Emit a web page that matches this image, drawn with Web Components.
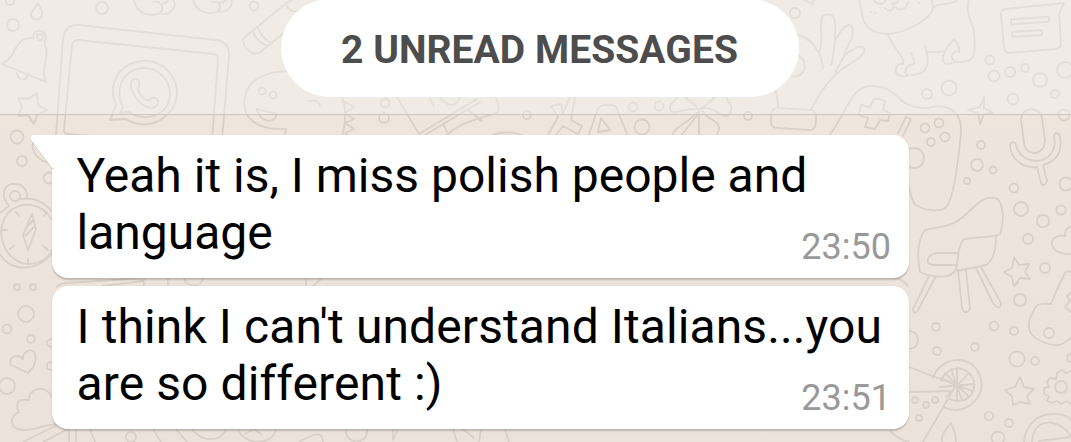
<!DOCTYPE html>
<html lang="en">
<head>
<meta charset="utf-8">
<title>Chat</title>
<style>
  body {
    margin: 0;
    height: 442px;
    overflow: hidden;
    font-family: Roboto, "Noto Sans", sans-serif;
  }
  .wide {
    letter-spacing: 0.1px;
  }
</style>
</head>
<body>
<chat-screen>
  <unread-divider>2 UNREAD MESSAGES</unread-divider>
  <chat-message time="23:50" tail>
    <text-line>Yeah it is, I miss polish people and</text-line>
    <text-line>language</text-line>
  </chat-message>
  <chat-message time="23:51">
    <text-line class="wide">I think I can't understand Italians...you</text-line>
    <text-line class="wide">are so different :)</text-line>
  </chat-message>
</chat-screen>

<script>
const define = (name, html, setup) => {
  const template = document.createElement("template");
  template.innerHTML = html;
  customElements.define(name, class extends HTMLElement {
    constructor() {
      super();
      this.attachShadow({ mode: "open" });
      this.shadowRoot.appendChild(template.content.cloneNode(true));
    }
    connectedCallback() {
      if (setup) setup(this, this.shadowRoot);
    }
  });
};

// Small rings scattered over the wallpaper: x, y, radius
const rings = [
  [10,1,4],[13,25,6],[102,8,6],[254,6,4.5],[17,137,6.5],[22,161,5],[49,178,5.5],
  [17,287,3],[33,287,3],[26,314,8],[7,329,4.5],[31,339,4],[51,343,4],[51,366,4],[7,386,8],
  [131,437,5],[385,103,4.5],[384,118,5],[527,115,4],[633,107,4.5],[659,106,4.5],
  [642,127,7.5],[748,116,4],[795,13,5],[990,60,4.5],[994,76,5.5],[1010,72,5],[1025,68,4],
  [1040,80,7],[1065,70,8],[1013,99,5.5],[1055,94,4],[1064,115,5.5],[949,88,7.5],
  [927,94,5],[925,128,4.5],[939,123,4.5],[931,142,4],[945,137,4.5],[914,158,10],
  [981,145,4],[977,165,6],[993,170,3.5],[967,181,3],[1014,188,4.5],[1021,209,7],
  [1043,221,6.2],[1061,210,4.7],[1066,184,6.5],[1028,239,5],[1045,268,5],
  [1020,300,6],[1049,333,5],[936,327,4],[994,326,4.5],[1014,331,4],[937,351,4],
  [975,347,4],[1017,359,7.7],[1035,361,4],[1071,358,4],[909,340,9],
  [915,400,3],[926,405,3],[935,400,3],[919,418,3],[989,416,4.3],[1009,423,4],[998,438,6.5]
];

define("chat-wallpaper", `
  <style>
    :host {
      display: block;
      background: linear-gradient(#eee6dd 114px, #ede4dd 200px, #ece2dc);
    }
    svg {
      display: block;
      fill: none;
      stroke: #d9d0c8;
      stroke-width: 1.8;
      stroke-linecap: round;
      stroke-linejoin: round;
    }
  </style>
  <svg width="1071" height="442" viewBox="0 0 1071 442">
    <g class="rings"></g>
    <!-- drop, bell and star -->
    <path d="M38 3C35 8 31 11 31 15C32 21 41 21 42 15C43 11 40 8 38 3Z"/>
    <path d="M2 64C14 59 15 43 24 39C29 37 32 39 34 38C31 31 42 28 45 34C48 39 43 42 45 45C51 56 39 70 46 82Z"/>
    <circle cx="40" cy="37" r="3"/>
    <path d="M17 73C18 81 25 81 28 76"/>
    <path d="M37 93L38 105L47 110L37 115L34 124L28 115L18 116L22 107L18 98L28 99Z"/>
    <!-- tablet with a handset badge -->
    <path d="M56 135L63 39Q65 24 79 25L216 40Q230 42 229 56L222 140"/>
    <path d="M68 134Q64 134 64 130L72 45Q73 40 78 40L214 54Q219 55 218 60L212 140"/>
    <path d="M68 134L92 136"/>
    <path d="M110 120L116 105C107 84 119 63 143 61C162 60 177 75 177 93C176 118 147 133 126 119Z"/>
    <path d="M120 113L123 107C114 91 122 70 142 68C158 67 170 80 170 94C169 116 145 123 129 112Z"/>
    <path d="M134 79C140 77 140 86 138 89C140 96 145 100 149 101C152 95 158 98 158 103C155 112 143 107 137 99C131 91 128 82 134 79Z"/>
    <!-- mittens -->
    <path d="M134 0C136 13 150 18 160 13C165 9 161 0 153 2M160 13C169 17 178 7 173 0M168 0C166 3 163 4 161 4"/>
    <path d="M193 0C195 9 205 16 217 12C223 8 219 0 212 2M219 12C227 13 234 5 231 0M226 0C223 3 220 3 219 3"/>
    <!-- crayon -->
    <path d="M285 4L245 37C239 42 249 56 259 53L300 20M253 31C255 39 263 44 267 46M258 28C260 35 267 41 271 43M286 4C288 11 295 13 301 10M286 3L300 -4"/>
    <!-- ghost bubble -->
    <path d="M300 73C276 68 248 76 245 97C241 117 256 131 286 129L283 142"/>
    <circle cx="262" cy="91" r="3.5"/><circle cx="273" cy="95" r="3.5"/>
    <path d="M257 109L277 114C275 124 259 123 257 109ZM309 101C315 99 319 102 320 106"/>
    <path d="M341 96C347 105 346 125 341 140M345 102L354 107L345 113L354 119L345 123L354 129L345 133L352 139"/>
    <!-- pencil case -->
    <path d="M397 97L419 134L477 99M420 138L480 102M440 142C455 124 471 121 494 114C500 112 500 108 496 98M430 99L434 106M443 124L447 132M468 110L482 121M474 114L480 121M440 97C446 106 456 109 460 97M484 140C496 131 513 130 526 137"/>
    <!-- letters -->
    <path d="M570 97L563 113L561 104L551 106L558 117L548 135M575 97L571 120L582 126L578 134L563 126L550 142M587 140L597 111Q599 105 605 105H612Q617 106 618 112L628 136M598 132L601 118L610 130Z"/>
    <!-- clover -->
    <path d="M699 109C685 107 672 117 670 109C668 103 675 104 677 97M699 109C713 103 725 123 730 113C734 106 729 104 726 97M685 97L697 107M715 97L701 109M698 112C687 124 676 125 672 136M699 113L680 137M699 111V137M702 110C709 123 726 120 716 136"/>
    <!-- glove -->
    <path d="M798 35C809 37 821 50 823 68M798 55Q807 61 804 70Q800 78 792 76M775 89Q778 100 778 107M819 52C825 42 817 19 824 15C840 11 834 31 835 41C833 51 834 58 831 65M835 41C841 30 847 22 851 26C858 35 844 48 844 57C840 62 839 67 835 72M845 55C853 49 861 44 864 48C868 54 852 63 842 69C829 79 818 96 811 110"/>
    <rect x="771" y="109" width="45" height="20" rx="6" transform="rotate(4 793 119)"/>
    <path d="M800 -2L813 4L814 -2"/>
    <!-- dog -->
    <path d="M857 -3C861 1 861 12 863 19C873 47 918 30 931 13C936 7 929 1 933 -2M874 0C876 5 884 5 886 0M892 4C898 4 899 0 897 -1M894 5C893 11 889 13 885 8M896 7C898 11 907 10 908 2M934 7C942 1 951 7 959 -1M969 -2C965 17 973 21 974 32C977 60 972 63 956 62C948 59 953 49 959 52C961 47 956 42 954 39C951 43 948 45 945 51C940 53 935 52 928 52M888 34C891 46 900 51 903 60V64C894 62 893 75 901 76C906 78 909 74 908 75C903 75 906 65 911 65L915 63L911 53M925 46C930 62 929 75 912 75M945 51C939 64 946 66 955 62"/>
    <path d="M871 12h.1M875 13h.1M919 3h.1"/>
    <!-- speech card -->
    <path d="M1064 3L1006 9Q1000 10 1001 15L1004 48Q1005 53 1009 53L1056 49Q1061 48 1061 43L1059 14Z"/>
    <rect x="1011" y="18" width="38" height="5" rx="1" transform="rotate(-4 1030 20)"/>
    <rect x="1012" y="31" width="30" height="5" rx="1" transform="rotate(-4 1027 34)"/>
    <!-- gamepad -->
    <path d="M829 136C847 111 851 89 868 86C901 84 891 108 928 108C943 103 962 108 961 132C958 164 954 197 947 206C943 213 921 211 914 203C910 195 909 188 908 180"/>
    <path d="M879 99L885 101L883 110L890 113L888 121L880 120L875 129L865 127L868 118L859 115L861 105L870 107L874 99Z"/>
    <path d="M906 117L911 119L903 136M906 117L898 133"/>
    <path d="M984 97L980 107L968 110L978 113L980 124L984 114L993 113L984 108Z"/>
    <!-- microphone -->
    <path d="M1024 142L1021 120C1021 105 1041 107 1042 118L1045 140C1045 157 1024 157 1024 142ZM1016 144Q1012 140 1010 145C1010 158 1023 169 1037 167L1041 183Q1044 188 1047 181L1043 165C1060 160 1062 149 1060 136Q1056 130 1054 136C1060 166 1020 169 1016 144Z"/>
    <!-- chair -->
    <path d="M925 230C944 225 950 228 964 216C975 207 984 193 998 199C1004 207 1004 224 1000 234C990 239 971 236 963 240C956 251 959 260 956 269C950 282 926 275 920 272C916 253 919 238 925 230ZM958 253H936C925 256 926 264 933 265H957M996 237C996 253 992 261 986 265L957 271M929 276L913 309Q914 316 918 310L936 276M958 270L962 308Q965 316 970 309L966 270M976 268L993 303Q1000 312 1001 303L981 267"/>
    <path d="M1014 257L1019 265L1029 264L1025 272L1030 279L1020 278L1014 286L1012 277L1004 272L1012 268ZM1071 226C1065 229 1065 233 1065 236C1047 233 1046 255 1071 254M1057 290L1065 273Q1067 270 1071 272"/>
    <!-- guitar -->
    <path d="M1060 282L1051 304C1036 302 1036 306 1030 318C1026 331 1032 338 1043 342C1056 347 1062 347 1071 337M1071 292L1067 296L1070 301L1065 307L1071 312M1013 282Q1013 290 1018 282"/>
    <!-- barrow -->
    <path d="M909 367L956 385L923 442M909 392L952 391M933 378C939 357 972 352 980 376C988 397 964 418 943 407M941 381C948 363 970 365 974 382C976 397 962 405 950 399M957 368V401M945 373L969 397M940 387L974 384M946 397L968 374M951 369L962 400M941 378L972 391M890 431Q899 440 909 442M951 423Q937 438 944 445M951 423Q958 438 955 445"/>
    <path d="M1020 377L1024 387L1034 389L1027 396L1030 404L1020 402L1013 405L1012 396L1005 390L1015 387ZM1071 371L1066 373L1062 370L1057 373L1056 379L1050 378L1047 382L1049 387L1044 388V394L1049 396L1047 401L1052 403L1057 401L1061 404L1067 401L1071 404"/>
    <circle cx="1061" cy="387" r="6"/>
    <path d="M1024 442C1027 405 1071 412 1071 421M1032 442C1033 414 1063 420 1071 437L1039 441"/>
    <!-- compass, hearts and cloud -->
    <path d="M9 206C-1 194 5 183 15 184C26 184 28 195 27 199M20 199C36 197 43 202 52 211M52 254C32 276 6 268 0 254M9 206L0 213M52 220C41 201 20 201 8 213C-3 227 0 247 13 258C27 270 47 262 52 250M32 214L36 229L28 250L23 235ZM23 235L32 214M25 230L33 220M26 235L34 227M16 212L19 216M47 212L44 216M3 230H7M10 249L14 246M43 246L48 250M28 259V263"/>
    <circle cx="15" cy="196" r="5"/>
    <path d="M30 120L34 123L36 119M33 142C31 151 37 162 52 163"/>
    <path d="M28 373L11 365C8 357 17 353 23 359C22 350 35 347 35 355C37 363 33 368 28 373ZM52 397C45 383 28 389 29 400C17 398 15 405 19 412C12 415 10 422 14 427C28 436 47 422 56 425M23 442L57 425M43 442L66 430M69 429V442M76 429V442M90 429L95 442M153 429L161 442M176 429L187 442M190 426C201 444 222 443 227 427M238 429C243 446 274 446 276 429M245 434L254 429L261 434M300 441L313 435Q323 432 323 442M346 429C344 445 369 446 367 429M393 429V440L398 429M453 429L457 442M463 429L474 438M481 429L479 442M505 429L509 442"/>
    <path d="M57 287Q60 283 68 283L144 278V286M103 286L143 281M168 278V286M184 278C186 288 202 288 203 278M306 278V286M313 286L322 278M908 286Q902 278 893 278"/>
  </svg>
`, (host, root) => {
  root.querySelector(".rings").innerHTML = rings
    .map(([x, y, r]) => `<circle cx="${x}" cy="${y}" r="${r}"/>`)
    .join("");
});

define("chat-screen", `
  <style>
    :host {
      display: grid;
      width: 1071px;
      height: 442px;
      overflow: hidden;
    }
    chat-wallpaper, .thread {
      grid-area: 1 / 1;
    }
    .thread {
      display: flex;
      flex-direction: column;
      align-items: flex-start;
      gap: 8px;
      z-index: 1;
    }
    ::slotted(unread-divider) {
      margin-bottom: 12px;
    }
  </style>
  <chat-wallpaper></chat-wallpaper>
  <div class="thread"><slot></slot></div>
`);

define("unread-divider", `
  <style>
    :host {
      display: flex;
      justify-content: center;
      align-items: flex-start;
      box-sizing: border-box;
      width: 1071px;
      height: 115px;
      padding-left: 8px;
      background: rgba(243, 242, 240, 0.4);
      border-bottom: 1px solid #cbc5be;
    }
    .pill {
      box-sizing: border-box;
      width: 518px;
      height: 98px;
      margin-top: -1px;
      border-radius: 49px;
      background: #fff;
      color: #4d4d4d;
      text-align: center;
      font-size: 39px;
      font-weight: 700;
      letter-spacing: 0.06px;
      line-height: 103px;
      white-space: nowrap;
    }
  </style>
  <div class="pill"><slot></slot></div>
`);

define("text-line", `
  <style>
    :host {
      display: block;
      white-space: nowrap;
    }
  </style>
  <slot></slot>
`);

define("chat-message", `
  <style>
    :host {
      display: flex;
      position: relative;
      justify-content: space-between;
      box-sizing: border-box;
      width: 857px;
      height: 143px;
      margin-left: 52px;
      padding: 12px 18px 0 24.5px;
      border-radius: 16px;
      background: #fff;
      box-shadow: 0 1.5px 1.5px rgba(100, 85, 75, 0.3);
      color: #000;
      font-size: 48px;
      line-height: 57px;
    }
    :host([tail]) {
      border-top-left-radius: 0;
    }
    .tail {
      display: none;
      position: absolute;
      left: -22px;
      top: 0;
      filter: drop-shadow(0 1px 0.7px rgba(100, 85, 75, 0.25));
    }
    :host([tail]) .tail {
      display: block;
    }
    .text {
      width: 0;
    }
    time {
      align-self: flex-end;
      padding-bottom: 12px;
      color: #999;
      font-size: 36px;
      line-height: 38px;
    }
  </style>
  <svg class="tail" width="24" height="36"><path d="M24 0H4Q0 0 1 5L22 33H24Z" fill="#fff"/></svg>
  <div class="text"><slot></slot></div>
  <time></time>
`, (host, root) => {
  root.querySelector("time").textContent = host.getAttribute("time");
});
</script>
</body>
</html>
